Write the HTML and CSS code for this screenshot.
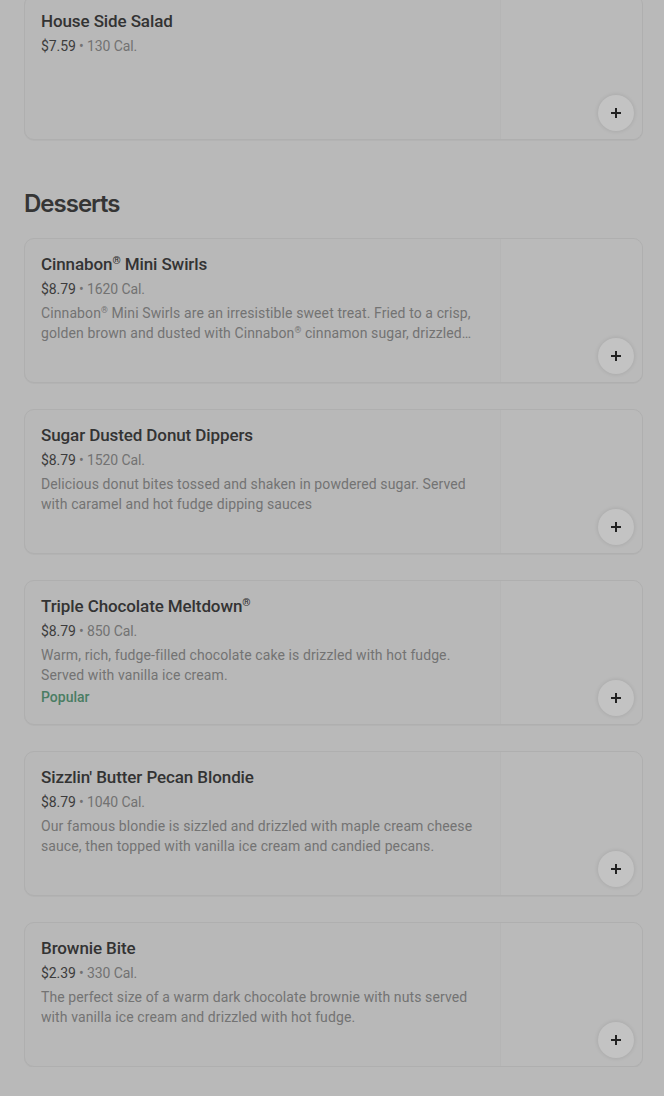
FILE: index.html
```html
<!DOCTYPE html>
<html>
<head>
<meta charset="utf-8">
<link rel="stylesheet" href="styles.css">
</head>
<body>
<main class="menu">
  <section class="section section-first">
    <div class="cards">
      <article class="card">
        <div class="card-body">
          <h3 class="item-title">House Side Salad</h3>
          <p class="item-meta"><span class="price">$7.59</span> • 130 Cal.</p>
        </div>
        <div class="card-media"><button class="add" aria-label="Add"><svg viewBox="0 0 12 12" width="12" height="12"><path d="M6 1v10M1 6h10" stroke="currentColor" stroke-width="2"/></svg></button></div>
      </article>
    </div>
  </section>

  <section class="section">
    <h2 class="section-title">Desserts</h2>
    <div class="cards">
      <article class="card">
        <div class="card-body">
          <h3 class="item-title">Cinnabon<span class="reg">®</span> Mini Swirls</h3>
          <p class="item-meta"><span class="price">$8.79</span> • 1620 Cal.</p>
          <p class="item-desc">Cinnabon<span class="reg">®</span> Mini Swirls are an irresistible sweet treat. Fried to a crisp, golden brown and dusted with Cinnabon<span class="reg">®</span> cinnamon sugar, drizzled with cream cheese icing.</p>
        </div>
        <div class="card-media"><button class="add" aria-label="Add"><svg viewBox="0 0 12 12" width="12" height="12"><path d="M6 1v10M1 6h10" stroke="currentColor" stroke-width="2"/></svg></button></div>
      </article>
      <article class="card">
        <div class="card-body">
          <h3 class="item-title">Sugar Dusted Donut Dippers</h3>
          <p class="item-meta"><span class="price">$8.79</span> • 1520 Cal.</p>
          <p class="item-desc">Delicious donut bites tossed and shaken in powdered sugar. Served with caramel and hot fudge dipping sauces</p>
        </div>
        <div class="card-media"><button class="add" aria-label="Add"><svg viewBox="0 0 12 12" width="12" height="12"><path d="M6 1v10M1 6h10" stroke="currentColor" stroke-width="2"/></svg></button></div>
      </article>
      <article class="card">
        <div class="card-body">
          <h3 class="item-title">Triple Chocolate Meltdown<span class="reg">®</span></h3>
          <p class="item-meta"><span class="price">$8.79</span> • 850 Cal.</p>
          <p class="item-desc">Warm, rich, fudge-filled chocolate cake is drizzled with hot fudge. Served with vanilla ice cream.</p>
          <p class="item-tag">Popular</p>
        </div>
        <div class="card-media"><button class="add" aria-label="Add"><svg viewBox="0 0 12 12" width="12" height="12"><path d="M6 1v10M1 6h10" stroke="currentColor" stroke-width="2"/></svg></button></div>
      </article>
      <article class="card">
        <div class="card-body">
          <h3 class="item-title">Sizzlin' Butter Pecan Blondie</h3>
          <p class="item-meta"><span class="price">$8.79</span> • 1040 Cal.</p>
          <p class="item-desc">Our famous blondie is sizzled and drizzled with maple cream cheese sauce, then topped with vanilla ice cream and candied pecans.</p>
        </div>
        <div class="card-media"><button class="add" aria-label="Add"><svg viewBox="0 0 12 12" width="12" height="12"><path d="M6 1v10M1 6h10" stroke="currentColor" stroke-width="2"/></svg></button></div>
      </article>
      <article class="card">
        <div class="card-body">
          <h3 class="item-title">Brownie Bite</h3>
          <p class="item-meta"><span class="price">$2.39</span> • 330 Cal.</p>
          <p class="item-desc">The perfect size of a warm dark chocolate brownie with nuts served with vanilla ice cream and drizzled with hot fudge.</p>
        </div>
        <div class="card-media"><button class="add" aria-label="Add"><svg viewBox="0 0 12 12" width="12" height="12"><path d="M6 1v10M1 6h10" stroke="currentColor" stroke-width="2"/></svg></button></div>
      </article>
    </div>
  </section>
</main>
</body>
</html>
```
FILE: styles.css
```css
* { box-sizing: border-box; }
html, body {
  margin: 0;
  padding: 0;
  background: #b9b9b9;
}
body {
  font-family: Roboto, "Liberation Sans", sans-serif;
  color: #2b2b2b;
  overflow: hidden;
}
.menu {
  padding: 0 21px 0 24px;
  display: flex;
  flex-direction: column;
  gap: 48px;
}
.section-first {
  margin-top: -5px;
}
.section-title {
  margin: 0 0 18px;
  font-family: Inter, Roboto, sans-serif;
  font-size: 24px;
  line-height: 32px;
  font-weight: 600;
  letter-spacing: -1px;
  color: #353535;
}
.cards {
  display: flex;
  flex-direction: column;
  gap: 26px;
}
.card {
  height: 145px;
  border: 1px solid #afafaf;
  border-radius: 10px;
  display: flex;
  overflow: hidden;
  background: #b8b8b8;
  box-shadow: 0 1px 0 rgba(0,0,0,0.03);
}
.card-body {
  flex: 1;
  padding: 15px 16px 0;
  min-width: 0;
}
.item-title {
  margin: 0;
  font-size: 17px;
  line-height: 20px;
  font-weight: 500;
  color: #333333;
  letter-spacing: -0.1px;
}
.reg {
  font-size: 0.62em;
  line-height: 1;
  position: relative;
  top: -0.55em;
}
.item-meta {
  margin: 5px 0 0;
  font-size: 14px;
  line-height: 20px;
  color: #727272;
  letter-spacing: -0.1px;
}
.price {
  color: #3c3c3c;
}
.item-desc {
  margin: 4px 0 0;
  width: 444px;
  max-height: 40px;
  font-size: 14px;
  line-height: 20px;
  color: #737373;
  letter-spacing: 0.1px;
  display: -webkit-box;
  -webkit-line-clamp: 2;
  -webkit-box-orient: vertical;
  overflow: hidden;
}
.item-tag {
  margin: 2px 0 0;
  font-size: 14px;
  line-height: 20px;
  font-weight: 500;
  color: #4a7d63;
}
.card-media {
  width: 142px;
  flex: none;
  background: #bababa;
  border-left: 1px solid #b5b5b5;
  display: flex;
  align-items: flex-end;
  justify-content: flex-end;
  padding: 0 8px 8px 0;
}
.add {
  width: 36px;
  height: 36px;
  border-radius: 50%;
  border: none;
  padding: 0;
  background: #c3c3c3;
  color: #222222;
  display: flex;
  align-items: center;
  justify-content: center;
  box-shadow: 0 0 4px rgba(0,0,0,0.12);
}
```
